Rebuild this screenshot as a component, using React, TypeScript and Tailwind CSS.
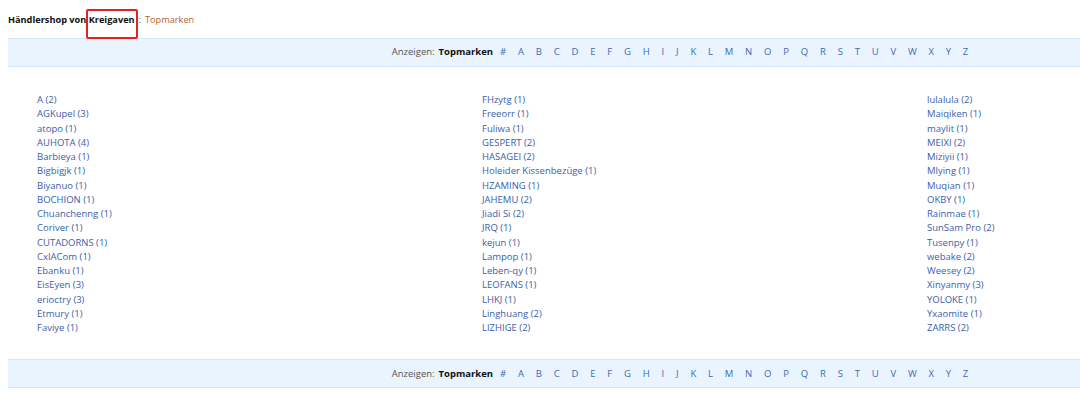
const col1 = [
  'A (2)',
  'AGKupel (3)',
  'atopo (1)',
  'AUHOTA (4)',
  'Barbieya (1)',
  'Bigbigjk (1)',
  'Biyanuo (1)',
  'BOCHION (1)',
  'Chuanchenng (1)',
  'Coriver (1)',
  'CUTADORNS (1)',
  'CxIACom (1)',
  'Ebanku (1)',
  'EisEyen (3)',
  'erioctry (3)',
  'Etmury (1)',
  'Faviye (1)',
];

const col2 = [
  'FHzytg (1)',
  'Freeorr (1)',
  'Fuliwa (1)',
  'GESPERT (2)',
  'HASAGEI (2)',
  'Holeider Kissenbezüge (1)',
  'HZAMING (1)',
  'JAHEMU (2)',
  'Jiadi Si (2)',
  'JRQ (1)',
  'kejun (1)',
  'Lampop (1)',
  'Leben-qy (1)',
  'LEOFANS (1)',
  'LHKJ (1)',
  'Linghuang (2)',
  'LIZHIGE (2)',
];

const col3 = [
  'lulalula (2)',
  'Maiqiken (1)',
  'maylit (1)',
  'MEIXI (2)',
  'Miziyii (1)',
  'Mlying (1)',
  'Muqian (1)',
  'OKBY (1)',
  'Rainmae (1)',
  'SunSam Pro (2)',
  'Tusenpy (1)',
  'webake (2)',
  'Weesey (2)',
  'Xinyanmy (3)',
  'YOLOKE (1)',
  'Yxaomite (1)',
  'ZARRS (2)',
];

const letters = '#ABCDEFGHIJKLMNOPQRSTUVWXYZ'.split('');

function LetterBar() {
  return (
    <div className="flex h-[29px] w-[1344px] shrink-0 items-center justify-center border-y border-[#d5e7f8] bg-[#eaf4fe]">
      <span className="text-[#555]">Anzeigen:</span>
      <span className="ml-[4px] font-bold text-[#111]">Topmarken</span>
      <div className="ml-[7px] flex gap-[11.8px]">
        {letters.map((l) => (
          <a key={l} href="#" className="text-[#3d6bb3]">
            {l}
          </a>
        ))}
      </div>
    </div>
  );
}

function BrandColumn({ items }: { items: string[] }) {
  return (
    <ul className="w-[445px] shrink-0">
      {items.map((item) => (
        <li key={item} className="h-[14.25px] leading-[14.25px]">
          <a href="#" className="text-[#3b60a9]">
            {item}
          </a>
        </li>
      ))}
    </ul>
  );
}

export default function App() {
  return (
    <div
      className="h-[393px] w-[1080px] overflow-hidden bg-white text-[9.5px] text-[#111]"
      style={{ fontFamily: '"Open Sans", "Noto Sans", sans-serif' }}
    >
      <div className="w-[1352px] pl-[8px]">
        {/* Header */}
        <div className="relative flex h-[38px] items-center pt-[2px] text-[9.2px]">
          <span className="font-bold">Händlershop von Kreigaven</span>
          <span className="ml-[4px] text-[#555]">:</span>
          <span className="ml-[4px] text-[#b8652c]">Topmarken</span>
          <div className="absolute left-[78px] top-[9px] h-[30px] w-[52px] rounded-[2px] border-2 border-[#e3231e]" />
        </div>

        <LetterBar />

        {/* Brand list */}
        <div className="flex pb-[24px] pl-[29px] pt-[26px]">
          <BrandColumn items={col1} />
          <BrandColumn items={col2} />
          <BrandColumn items={col3} />
        </div>

        <LetterBar />
      </div>
    </div>
  );
}
